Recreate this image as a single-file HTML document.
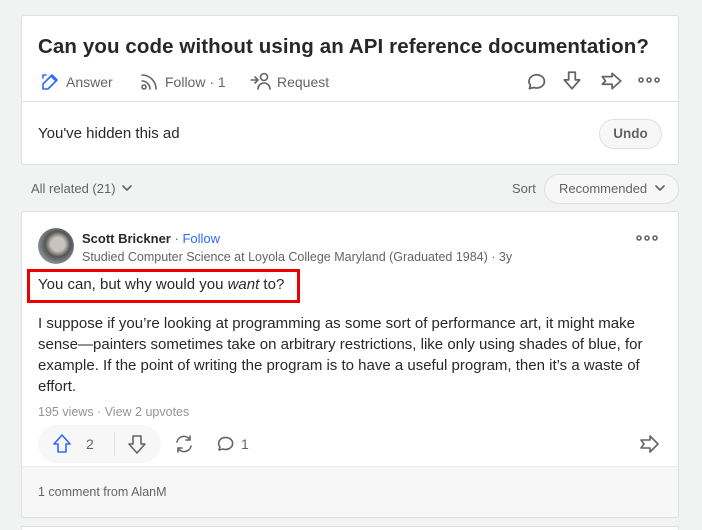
<!DOCTYPE html>
<html><head><style>
*{box-sizing:border-box;margin:0;padding:0}
html,body{width:702px;height:530px;overflow:hidden}
body{background:#f1f2f2;font-family:"Liberation Sans",sans-serif;color:#282829;position:relative}
.card{position:absolute;left:21px;width:658px;background:#fff;border:1px solid #dee0e1;border-radius:3px}
.abs{position:absolute;white-space:nowrap}
svg{position:absolute;fill:none;stroke-width:1.6;stroke-linecap:round;stroke-linejoin:round}
</style></head><body>
<div class="card" style="top:15px;height:150px"></div>
<div class="abs" style="left:38px;top:35px;font-size:20.5px;font-weight:bold;letter-spacing:0.1px">Can you code without using an API reference documentation?</div>
<svg style="left:40px;top:72px" width="20" height="20" viewBox="0 0 20 20" stroke="#2e69ff" stroke-width="1.8"><path d="M3 17h5L17 8l-5-5-9 9z M11 4l5 5"/><path d="M3 3h3M3 3v3"/></svg>
<div class="abs" style="left:66px;top:74px;font-size:14px;color:#636466">Answer</div>
<svg style="left:139px;top:72px" width="20" height="20" viewBox="0 0 20 20" stroke="#636466"><circle cx="5" cy="15" r="2"/><path d="M3 9a8 8 0 0 1 8 8M3 3a14 14 0 0 1 14 14"/></svg>
<div class="abs" style="left:165px;top:74px;font-size:14px;color:#636466">Follow · 1</div>
<svg style="left:250px;top:71px" width="22" height="20" viewBox="0 0 22 20" stroke="#636466"><path d="M1 9h7M5 6l3 3-3 3"/><circle cx="14" cy="6" r="3.5"/><path d="M8 18a6 6 0 0 1 12 0"/></svg>
<div class="abs" style="left:277px;top:74px;font-size:14px;color:#636466">Request</div>
<svg style="left:525px;top:71px" width="22" height="22" viewBox="0 0 20 20" stroke="#636466"><path d="M4 16l1-3a7 6 0 1 1 3 2z"/></svg>
<svg style="left:561px;top:70px" width="22" height="22" viewBox="0 0 20 20" stroke="#636466"><path d="M7 2h6v7h4l-7 8-7-8h4z"/></svg>
<svg style="left:599px;top:70px" width="24" height="22" viewBox="0 0 22 20" stroke="#636466"><path d="M12 3l8 7-8 7v-4H3l3-3-3-4h9z"/></svg>
<svg style="left:638px;top:75px" width="22" height="10" viewBox="0 0 22 10" stroke="#636466" stroke-width="1.4"><circle cx="3" cy="5" r="2"/><circle cx="11" cy="5" r="2"/><circle cx="19" cy="5" r="2"/></svg>
<div class="abs" style="left:22px;top:101px;width:656px;height:1px;background:#dee0e1"></div>
<div class="abs" style="left:38px;top:125px;font-size:15px">You've hidden this ad</div>
<div class="abs" style="left:599px;top:119px;width:63px;height:30px;border:1px solid #dee0e1;border-radius:15px;background:#f7f7f8;font-size:13.5px;font-weight:bold;color:#636466;text-align:center;line-height:28px">Undo</div>

<div class="abs" style="left:31px;top:181px;font-size:13px;color:#636466">All related (21)</div>
<svg style="left:121px;top:183px" width="12" height="10" viewBox="0 0 12 10" stroke="#636466" stroke-width="1.4"><path d="M2 3l4 4 4-4"/></svg>
<div class="abs" style="left:512px;top:181px;font-size:13px;color:#636466">Sort</div>
<div class="abs" style="left:544px;top:174px;width:135px;height:30px;border:1px solid #dee0e1;border-radius:15px;background:#f7f7f8;font-size:13px;color:#636466;line-height:28px;padding-left:14px">Recommended</div>
<svg style="left:654px;top:183px" width="12" height="10" viewBox="0 0 12 10" stroke="#636466" stroke-width="1.4"><path d="M2 3l4 4 4-4"/></svg>

<div class="card" style="top:211px;height:307px;overflow:hidden"><div style="position:absolute;left:0;right:0;bottom:0;height:51px;background:#f7f7f8;border-top:1px solid #eee"></div></div>
<div class="abs" style="left:38px;top:228px;width:36px;height:36px;border-radius:50%;background:radial-gradient(circle at 55% 45%,#c9c2bc 0 25%,#555 45%,#8a8f96 70%)"></div>
<div class="abs" style="left:82px;top:231px;font-size:13px"><b>Scott Brickner</b> <span style="color:#636466">·</span> <span style="color:#2e69ff">Follow</span></div>
<div class="abs" style="left:82px;top:250px;font-size:12.5px;color:#636466">Studied Computer Science at Loyola College Maryland (Graduated 1984) · 3y</div>
<svg style="left:636px;top:233px" width="22" height="10" viewBox="0 0 22 10" stroke="#636466" stroke-width="1.4"><circle cx="3" cy="5" r="2"/><circle cx="11" cy="5" r="2"/><circle cx="19" cy="5" r="2"/></svg>
<div class="abs" style="left:27px;top:269px;width:273px;height:34px;border:3px solid #ee0000"></div>
<div class="abs" style="left:38px;top:276px;font-size:15px">You can, but why would you <i>want</i> to?</div>
<div class="abs" style="left:38px;top:313px;width:620px;white-space:normal;font-size:15px;line-height:21px">I suppose if you’re looking at programming as some sort of performance art, it might make sense—painters sometimes take on arbitrary restrictions, like only using shades of blue, for example. If the point of writing the program is to have a useful program, then it’s a waste of effort.</div>
<div class="abs" style="left:38px;top:405px;font-size:12.5px;color:#939598">195 views · View 2 upvotes</div>
<div class="abs" style="left:38px;top:425px;width:123px;height:38px;border-radius:19px;background:#f7f7f8"></div>
<div class="abs" style="left:114px;top:432px;width:1px;height:24px;background:#dee0e1"></div>
<svg style="left:51px;top:433px" width="22" height="22" viewBox="0 0 22 22" stroke="#2e69ff" stroke-width="1.8"><path d="M11 2l8 9h-4v8H7v-8H3z"/></svg>
<div class="abs" style="left:86px;top:436px;font-size:14px;color:#636466">2</div>
<svg style="left:126px;top:433px" width="22" height="22" viewBox="0 0 22 22" stroke="#636466" stroke-width="1.6"><path d="M7 3h8v8h4l-8 9-8-9h4z"/></svg>
<svg style="left:173px;top:433px" width="22" height="22" viewBox="0 0 22 22" stroke="#636466" stroke-width="1.6"><path d="M4 9a7 7 0 0 1 13-2M18 13a7 7 0 0 1-13 2M17 3v4h-4M5 19v-4h4"/></svg>
<svg style="left:215px;top:434px" width="20" height="20" viewBox="0 0 20 20" stroke="#636466"><path d="M4 16l1-3a7 6 0 1 1 3 2z"/></svg>
<div class="abs" style="left:241px;top:436px;font-size:14px;color:#636466">1</div>
<svg style="left:638px;top:433px" width="22" height="22" viewBox="0 0 22 22" stroke="#636466"><path d="M12 3l8 8-8 8v-4H3l3-4-3-4h9z"/></svg>
<div class="abs" style="left:38px;top:485px;font-size:12.5px;color:#636466">1 comment from AlanM</div>
<div class="card" style="top:526px;height:4px;border-bottom:none"></div>
</body></html>
